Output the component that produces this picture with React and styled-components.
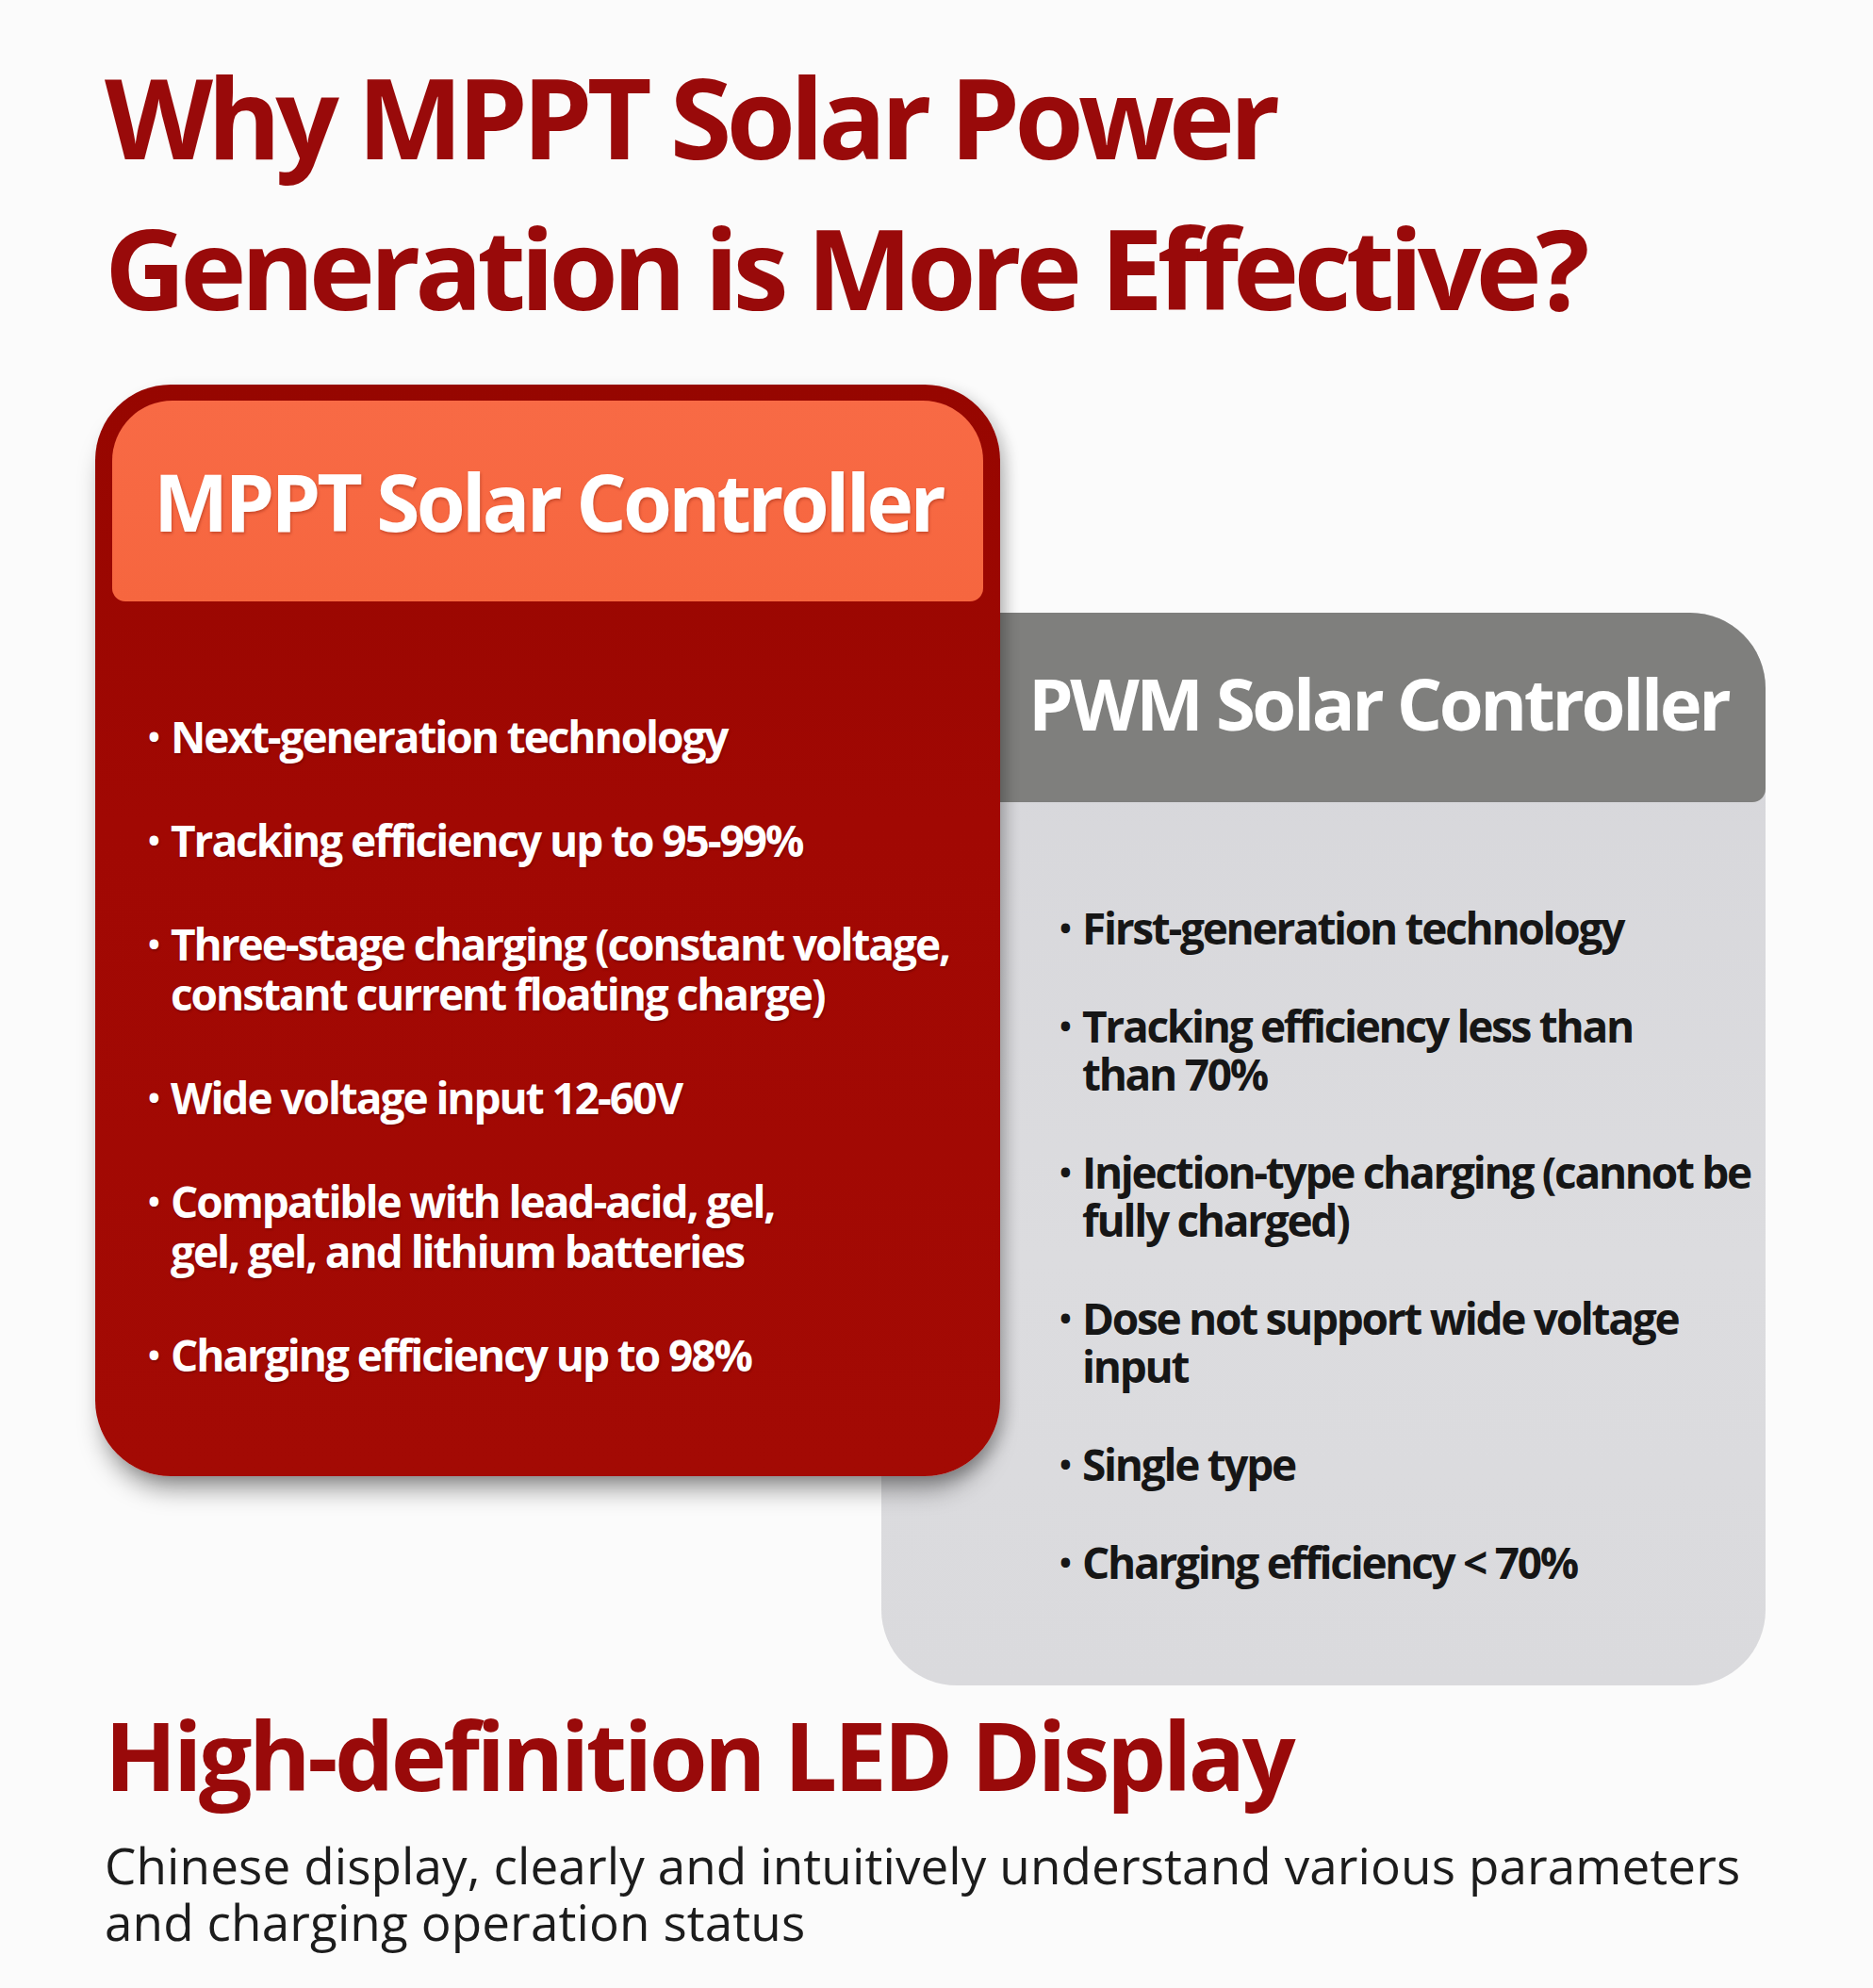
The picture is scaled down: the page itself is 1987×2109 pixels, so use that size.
import React from 'react';
import styled, { createGlobalStyle } from 'styled-components';

const GlobalStyle = createGlobalStyle`
  html, body {
    margin: 0;
    padding: 0;
    background: #fbfbfb;
  }
  * {
    box-sizing: border-box;
  }
`;

const Page = styled.div`
  width: 1987px;
  min-height: 2109px;
  padding: 43px 0 0 101px;
  background: #fbfbfb;
  font-family: "Open Sans", "Noto Sans", sans-serif;
  overflow: hidden;
`;

const Title = styled.h1`
  margin: 0 0 0 10px;
  font-size: 119px;
  line-height: 160px;
  font-weight: 700;
  letter-spacing: -0.05em;
  color: #990a0a;
`;

const Compare = styled.div`
  margin-top: 45px;
  display: grid;
  grid-template-columns: 834px 126px 812px;
  grid-template-rows: 242px 916px 222px;
`;

const MpptCard = styled.section`
  grid-column: 1 / 3;
  grid-row: 1 / 3;
  z-index: 2;
  display: flex;
  flex-direction: column;
  padding: 17px 18px 0;
  border-radius: 80px;
  background: linear-gradient(180deg, #960600 0%, #a10803 40%, #a30a04 100%);
  box-shadow: 0 22px 26px -8px rgba(0, 0, 0, 0.38), 8px 4px 14px rgba(0, 0, 0, 0.16);
`;

const MpptHeader = styled.h2`
  margin: 0;
  height: 213px;
  display: flex;
  align-items: center;
  padding-left: 44px;
  border-radius: 64px 64px 14px 14px;
  background: linear-gradient(180deg, #f86a45 0%, #f6663f 100%);
  color: #ffffff;
  font-size: 84px;
  font-weight: 700;
  letter-spacing: -0.045em;
  white-space: nowrap;
  text-shadow: 1px 2px 3px rgba(120, 20, 0, 0.35);
`;

const PwmCard = styled.section`
  grid-column: 2 / 4;
  grid-row: 2 / 4;
  z-index: 1;
  display: flex;
  flex-direction: column;
  border-radius: 80px;
  overflow: hidden;
  background: linear-gradient(180deg, #d6d6da 0%, #dcdcdf 60%, #dadadd 100%);
`;

const PwmHeader = styled.h2`
  margin: 0;
  height: 201px;
  display: flex;
  align-items: center;
  padding: 0 0 10px 156px;
  border-radius: 0 0 14px 0;
  background: #7f7f7d;
  color: #ffffff;
  font-size: 76px;
  font-weight: 700;
  letter-spacing: -0.045em;
  white-space: nowrap;
`;

const List = styled.ul`
  margin: 0;
  list-style: none;
  display: flex;
  flex-direction: column;
  gap: ${(p) => p.gap}px;
  padding: ${(p) => p.top}px 0 0 ${(p) => p.left}px;
`;

const Item = styled.li`
  display: flex;
  align-items: flex-start;
  font-size: 46px;
  line-height: ${(p) => p.lh}px;
  font-weight: 700;
  letter-spacing: ${(p) => (p.dark ? '-0.05em' : '-0.045em')};
  white-space: nowrap;
  color: ${(p) => (p.dark ? '#161616' : '#ffffff')};
  text-shadow: ${(p) => (p.dark ? 'none' : '1px 2px 2px rgba(80, 0, 0, 0.35)')};
`;

const Dot = styled.span`
  flex: 0 0 24px;
  font-size: 34px;
`;

const Footer = styled.div`
  margin: 13px 0 0 10px;
`;

const SubTitle = styled.h2`
  margin: 0;
  font-size: 100px;
  line-height: 120px;
  font-weight: 700;
  letter-spacing: -0.035em;
  color: #990a0a;
`;

const Blurb = styled.p`
  margin: 28px 0 0;
  font-size: 53px;
  line-height: 60px;
  font-weight: 400;
  letter-spacing: 0.002em;
  color: #1c1c1c;
  white-space: nowrap;
`;

const mpptPoints = [
  ['Next-generation technology'],
  ['Tracking efficiency up to 95-99%'],
  ['Three-stage charging (constant voltage,', 'constant current floating charge)'],
  ['Wide voltage input 12-60V'],
  ['Compatible with lead-acid, gel,', 'gel, gel, and lithium batteries'],
  ['Charging efficiency up to 98%'],
];

const pwmPoints = [
  ['First-generation technology'],
  ['Tracking efficiency less than', 'than 70%'],
  ['Injection-type charging (cannot be', 'fully charged)'],
  ['Dose not support wide voltage', 'input'],
  ['Single type'],
  ['Charging efficiency < 70%'],
];

const Points = ({ points, dark, lh, ...rest }) => (
  <List {...rest}>
    {points.map((lines) => (
      <Item key={lines[0]} dark={dark} lh={lh}>
        <Dot>•</Dot>
        <span>
          {lines.map((line, i) => (
            <React.Fragment key={line}>
              {i > 0 && <br />}
              {line}
            </React.Fragment>
          ))}
        </span>
      </Item>
    ))}
  </List>
);

const App = () => (
  <>
    <GlobalStyle />
    <Page>
      <Title>
        Why MPPT Solar Power
        <br />
        Generation is More Effective?
      </Title>
      <Compare>
        <MpptCard>
          <MpptHeader>MPPT Solar Controller</MpptHeader>
          <Points points={mpptPoints} lh={53} top={117} left={38} gap={57} />
        </MpptCard>
        <PwmCard>
          <PwmHeader>PWM Solar Controller</PwmHeader>
          <Points points={pwmPoints} dark lh={51} top={108} left={189} gap={53} />
        </PwmCard>
      </Compare>
      <Footer>
        <SubTitle>High-definition LED Display</SubTitle>
        <Blurb>
          Chinese display, clearly and intuitively understand various parameters
          <br />
          and charging operation status
        </Blurb>
      </Footer>
    </Page>
  </>
);

export default App;
